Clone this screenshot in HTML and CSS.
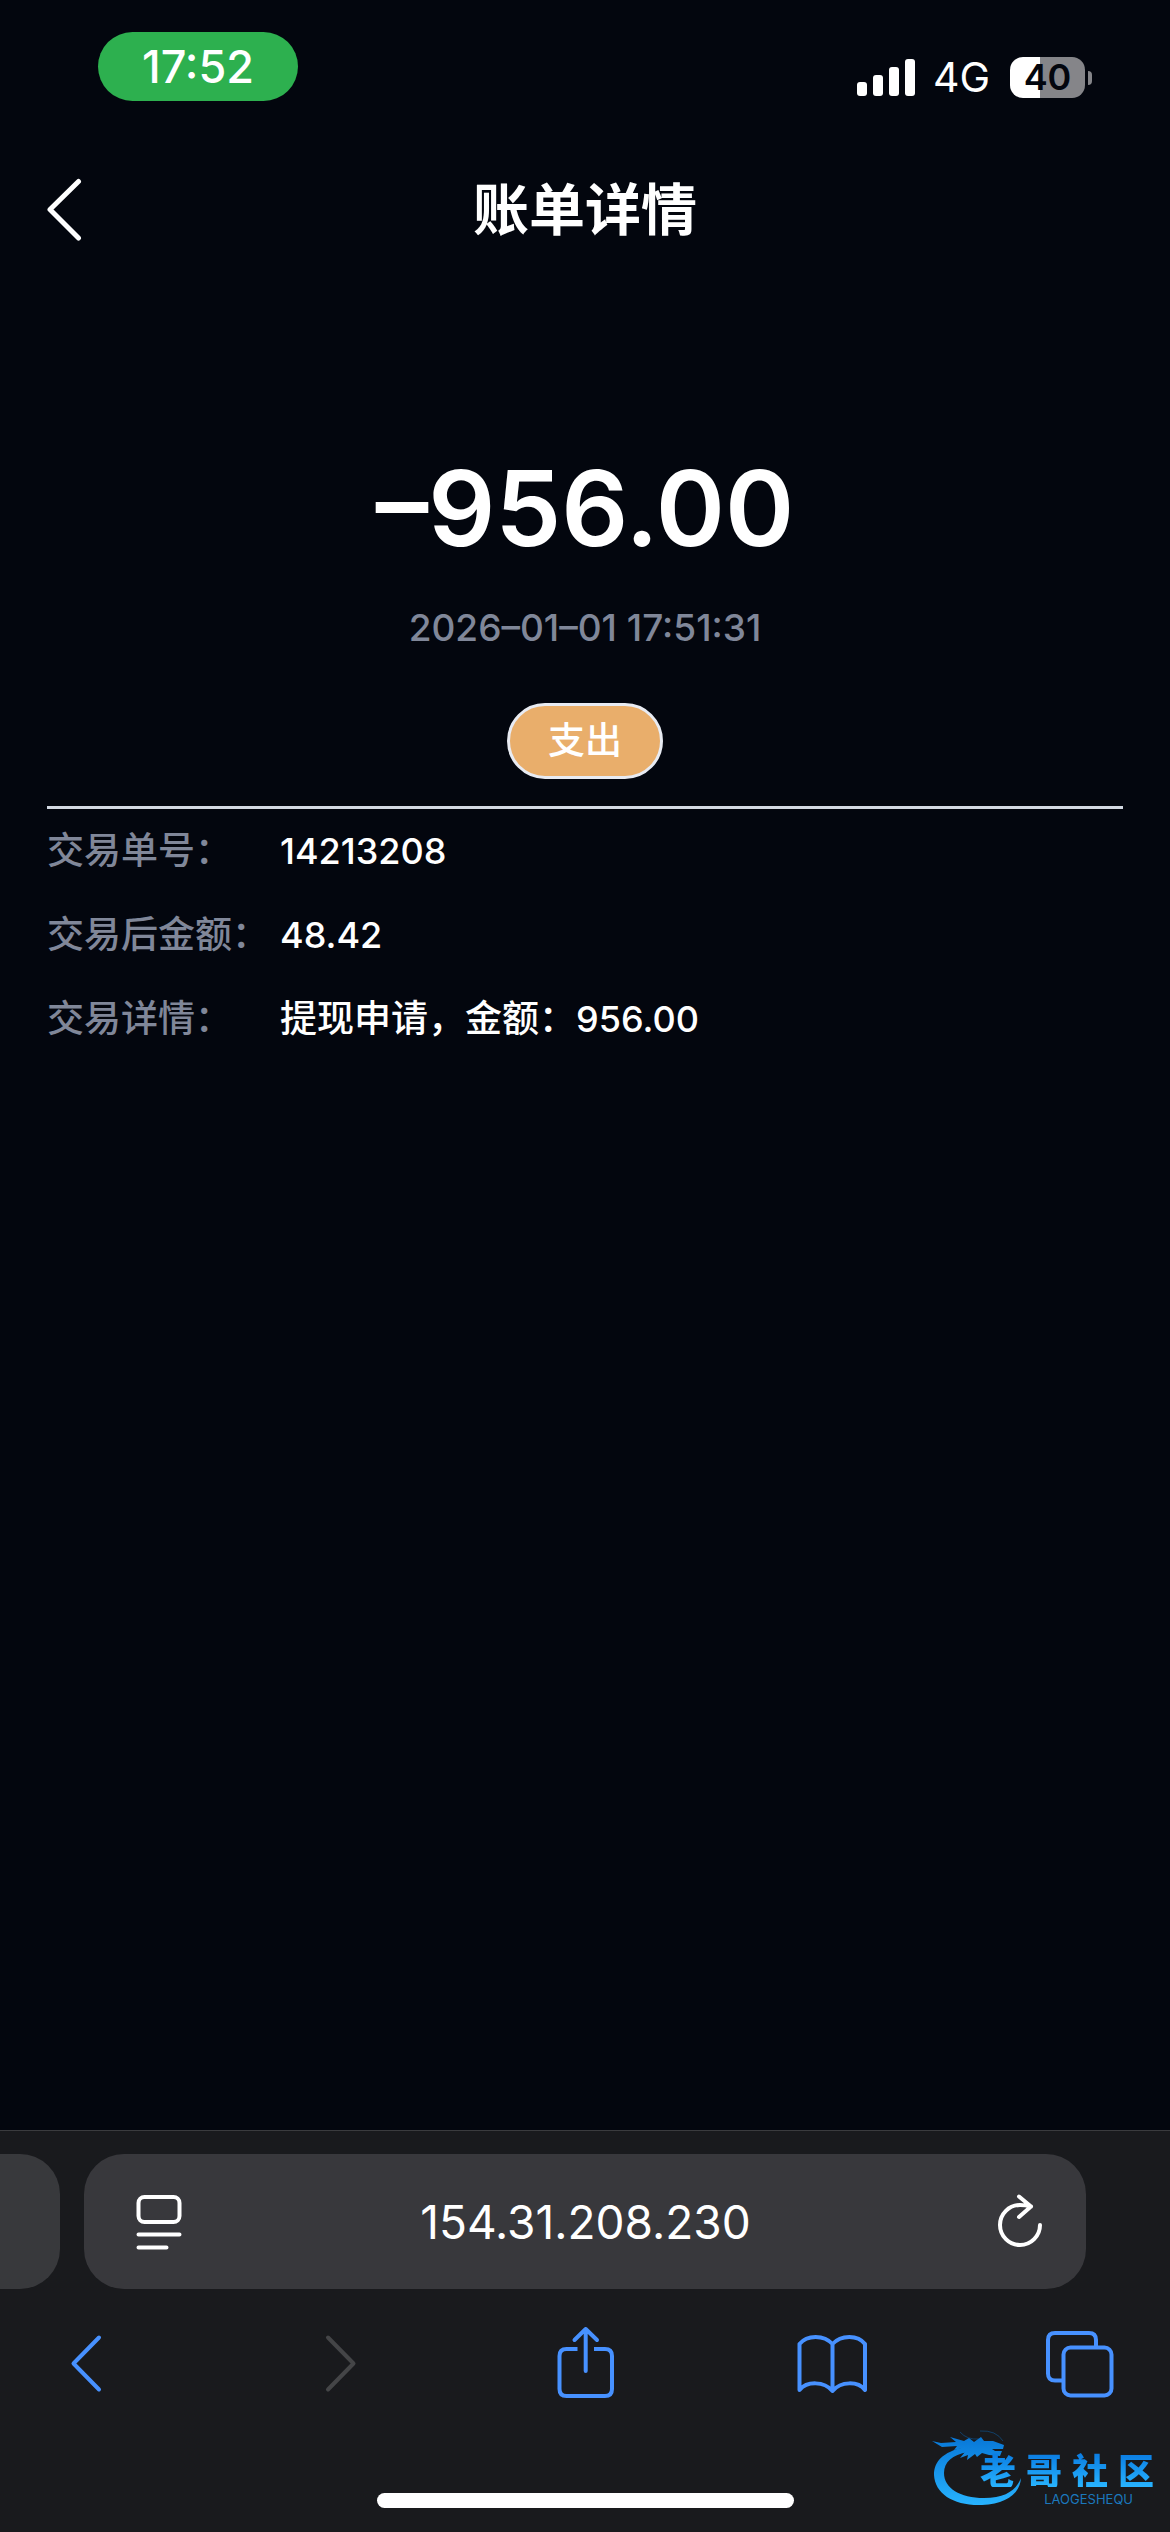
FILE: index.html
```html
<!DOCTYPE html>
<html lang="zh-CN">
<head>
<meta charset="utf-8">
<meta name="viewport" content="width=device-width, initial-scale=1">
<title>账单详情</title>
<link rel="stylesheet" href="styles.css">
</head>
<body>
<div class="status-bar">
  <span class="clock">17:52</span>
  <div class="indicators">
    <svg class="signal" width="58" height="41" viewBox="0 0 58 41" fill="#fff" aria-hidden="true">
      <rect x="0" y="25" width="10" height="14" rx="3"/><rect x="16" y="18" width="10" height="21" rx="3"/>
      <rect x="32" y="10" width="10" height="29" rx="3"/><rect x="48" y="2" width="10" height="37" rx="3"/>
    </svg>
    <span class="network">4G</span>
    <div class="battery"><span class="battery-level">40</span><span class="battery-nub"></span></div>
  </div>
</div>

<header class="page-header">
  <button class="icon-button" type="button" aria-label="返回">
    <svg width="36" height="64" viewBox="0 0 36 64" fill="none" stroke="#fff" stroke-width="5" stroke-linecap="round" stroke-linejoin="round" aria-hidden="true"><path d="M31.500 3.500 3 31.500 31.500 60"/></svg>
  </button>
  <h1 class="title">账单详情</h1>
</header>

<main class="bill">
  <section class="summary">
    <p class="amount">–956.00</p>
    <p class="time">2026–01–01 17:51:31</p>
    <span class="badge">支出</span>
  </section>
  <dl class="details">
    <div class="row"><dt>交易单号：</dt><dd><span class="number">14213208</span></dd></div>
    <div class="row"><dt>交易后金额：</dt><dd><span class="number">48.42</span></dd></div>
    <div class="row"><dt>交易详情：</dt><dd>提现申请，金额：<span class="number">956.00</span></dd></div>
  </dl>
</main>

<footer class="browser">
  <div class="address-row">
    <div class="previous-tab"></div>
    <div class="address">
      <button class="icon-button" type="button" aria-label="页面菜单">
        <svg width="46" height="56" viewBox="0 0 46 56" fill="none" stroke="#fff" stroke-width="4" stroke-linecap="round" aria-hidden="true"><rect x="2.500" y="3" width="41" height="25" rx="6"/><path d="M2.500 40.500h41M2.500 53.500h28"/></svg>
      </button>
      <input class="url" type="text" aria-label="地址" value="154.31.208.230">
      <button class="icon-button" type="button" aria-label="重新载入">
        <svg width="46" height="56" viewBox="0 0 46 56" fill="none" stroke="#fff" stroke-width="4" stroke-linecap="round" stroke-linejoin="round" aria-hidden="true"><path d="M43 31A20 20 0 1 1 23 11C27 11 30 11.500 34 12.500M22 2.500 34 12.500 22 23"/></svg>
      </button>
    </div>
  </div>
  <nav class="toolbar" aria-label="浏览器工具栏">
    <button class="icon-button" type="button" aria-label="后退"><svg width="72" height="76" viewBox="0 0 72 76" aria-hidden="true"><path d="M49 12.500 23.500 38.500 49 64.500"/></svg></button>
    <button class="icon-button" type="button" aria-label="前进" disabled><svg width="72" height="76" viewBox="0 0 72 76" aria-hidden="true"><path d="M30 12.500 55.500 38.500 30 64.500"/></svg></button>
    <button class="icon-button" type="button" aria-label="共享"><svg width="72" height="76" viewBox="0 0 72 76" aria-hidden="true"><path d="M30.500 24H19.500Q12.500 24 12.500 31V64Q12.500 71 19.500 71H58Q65 71 65 64V31Q65 24 58 24H47" stroke-linecap="butt"/><path d="M38.700 46V4M27.500 15 38.700 4 50 15"/></svg></button>
    <button class="icon-button" type="button" aria-label="书签"><svg width="72" height="76" viewBox="0 0 72 76" aria-hidden="true"><path d="M37.500 19C29 9.500 12 9.500 4.500 19V65C12 56 29 56 37.500 66C46 56 63 56 70 65V19C63 9.500 46 9.500 37.500 19V66"/></svg></button>
    <button class="icon-button" type="button" aria-label="标签页"><svg width="72" height="76" viewBox="0 0 72 76" aria-hidden="true"><path d="M20 55.500H12Q5 55.500 5 48.500V15Q5 8 12 8H46Q53 8 53 15V22" stroke-linecap="butt"/><rect x="20.500" y="22.500" width="48" height="48" rx="7"/></svg></button>
  </nav>
  <div class="home-indicator"></div>
  <div class="watermark">
    <svg class="dragon" width="90" height="78" viewBox="0 0 90 78" aria-hidden="true">
      <defs><linearGradient id="water" x1="0" y1="10" x2="0" y2="78" gradientUnits="userSpaceOnUse"><stop offset="0" stop-color="#0878d8"/><stop offset="1" stop-color="#28b4ff"/></linearGradient></defs>
      <path fill="url(#water)" d="M33 19C10 24 2 34 2 47 3 66 22 78 50 77 74 76 88 66 89 50 84 62 74 70 52 70 28 70 12 60 12 45 12 34 20 27 36 24Z"/>
      <path fill="url(#water)" d="M0 13 9 15 24 14 18 9 32 13 37 10 42 14 49 9 52 13 61 13 72 17 71 21 60 21 63 23 70 23 68 28 57 27 50 25 45 29 43 26 35 32 36 27 28 30 33 24 24 26 31 20 22 22 25 18 10 19Z"/>
      <path fill="none" stroke="#0878d8" stroke-width="1" opacity=".4" d="M28 4Q35 12 47 11M48 3Q64 2 71 13"/>
    </svg>
    <span class="brand"><span>老</span><span>哥</span><span>社</span><span>区</span></span>
    <span class="brand-latin">LAOGESHEQU</span>
  </div>
</footer>
</body>
</html>
```
FILE: styles.css
```css
* {
  box-sizing: border-box;
}

body {
  margin: 0;
  min-height: 100vh;
  display: flex;
  flex-direction: column;
  background: #03060e;
  color: #fff;
  font-family: Inter, "Noto Sans CJK SC", sans-serif;
  font-size: 37px;
}

h1, p, dl, dd {
  margin: 0;
}

.icon-button {
  display: flex;
  padding: 0;
  border: 0;
  background: none;
  color: inherit;
}

/* Status bar */
.status-bar {
  display: flex;
  justify-content: space-between;
  align-items: flex-start;
  height: 132px;
  padding: 32px 78px 0 98px;
}

.clock {
  width: 200px;
  border-radius: 35px;
  background: #2db04f;
  font-size: 45px;
  font-weight: 500;
  line-height: 69px;
  text-align: center;
}

.indicators {
  display: flex;
  align-items: center;
  padding-top: 24px;
}

.network {
  margin: 0 20px 0 18px;
  font-size: 41px;
  line-height: 43px;
}

.battery {
  display: flex;
  align-items: center;
  gap: 3px;
}

.battery-level {
  width: 75px;
  border-radius: 13px;
  background: linear-gradient(90deg, #fff 40%, #858589 40%);
  color: #03060e;
  font-size: 36px;
  font-weight: 600;
  line-height: 41px;
  text-align: center;
}

.battery-nub {
  width: 4px;
  height: 14px;
  border-radius: 0 4px 4px 0;
  background: #858589;
}

/* Page header */
.page-header {
  display: grid;
  grid-template-columns: 36px 1fr 36px;
  align-items: center;
  height: 156px;
  padding: 0 47px;
}

.title {
  font-size: 56px;
  font-weight: 700;
  line-height: 80px;
  text-align: center;
}

/* Bill */
.bill {
  flex: 1;
  padding: 160px 47px 0;
}

.summary {
  display: flex;
  flex-direction: column;
  align-items: center;
  padding-bottom: 27px;
  border-bottom: 3px solid #d3d9e2;
}

.amount {
  font-size: 105px;
  font-weight: 600;
  line-height: 120px;
}

.time {
  margin-top: 36px;
  color: #808799;
  font-weight: 500;
  line-height: 48px;
}

.badge {
  width: 156px;
  margin-top: 51px;
  border: 3px solid #e8ebf2;
  border-radius: 38px;
  background: #e9ae6b;
  font-weight: 500;
  line-height: 70px;
  text-align: center;
}

.row {
  display: flex;
  font-weight: 500;
  line-height: 84px;
}

.row dt {
  width: 233px;
  color: #808799;
}

.row dd {
  flex: 1;
}

.number {
  font-size: 36px;
}

/* Browser chrome */
.browser {
  position: relative;
  padding: 23px 0 24px;
  border-top: 1px solid #3a3b3e;
  background: #191a1d;
}

.address-row {
  display: flex;
  gap: 24px;
  height: 135px;
  padding-right: 84px;
}

.previous-tab {
  width: 60px;
  border-radius: 0 40px 40px 0;
  background: #38393c;
}

.address {
  flex: 1;
  display: flex;
  align-items: center;
  gap: 8px;
  padding: 0 43px 0 52px;
  border-radius: 40px;
  background: #38383c;
}

.url {
  flex: 1;
  min-width: 0;
  padding: 0 8px 0 0;
  border: 0;
  background: none;
  color: #fff;
  font: inherit;
  font-size: 46px;
  text-align: center;
}

.toolbar {
  display: flex;
  justify-content: space-between;
  align-items: center;
  height: 148px;
  padding: 0 55px 0 50px;
}

.toolbar svg {
  fill: none;
  stroke: #4791ff;
  stroke-width: 4;
  stroke-linecap: round;
  stroke-linejoin: round;
}

.toolbar :disabled svg {
  stroke: #444547;
}

.home-indicator {
  width: 417px;
  height: 15px;
  margin: 56px auto 0;
  border-radius: 8px;
  background: #fff;
}

/* Community watermark laid over the toolbar */
.watermark {
  position: absolute;
  right: 16px;
  bottom: 26px;
  width: 222px;
  height: 78px;
}

.dragon {
  display: block;
}

.brand {
  position: absolute;
  top: 23px;
  right: 0;
  display: flex;
  gap: 10px;
  background: linear-gradient(#0878e0, #28b4ff);
  background-clip: text;
  color: transparent;
  font-family: "Noto Sans CJK SC", sans-serif;
  font-size: 36px;
  font-weight: 900;
  line-height: 36px;
}

.brand-latin {
  position: absolute;
  right: 21px;
  bottom: 0;
  color: #1b78bd;
  font-size: 13px;
  line-height: 13px;
}
```
